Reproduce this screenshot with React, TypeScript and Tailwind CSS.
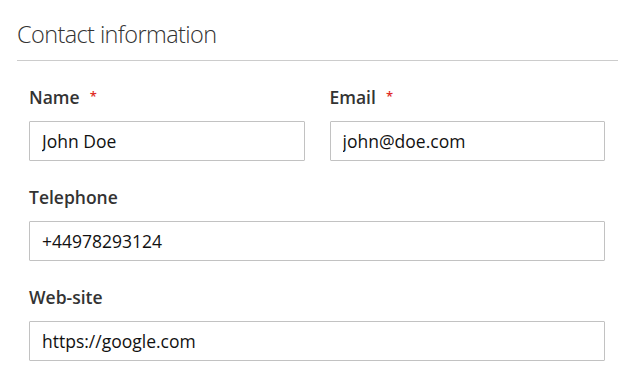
import React from "react";

function Field({ label, value, required }: { label: string; value: string; required?: boolean }) {
  return (
    <div className="flex flex-col">
      <label className="block h-[22px] text-[17.5px] leading-[22px] font-semibold text-[#333333] mb-[13px] whitespace-nowrap">
        {label}
        {required && <span className="text-[#e02b27] text-[13px] font-semibold ml-[10px] relative top-[-3px]">*</span>}
      </label>
      <input
        readOnly
        value={value}
        className="h-[40px] w-full border border-[#c2c2c2] rounded-[1px] bg-white px-[12px] text-[17.5px] text-[#111] outline-none"
        style={{ fontFamily: '"Open Sans", sans-serif' }}
      />
    </div>
  );
}

export default function App() {
  return (
    <div className="w-[641px] h-[386px] bg-white" style={{ fontFamily: '"Open Sans", sans-serif' }}>
      <div className="ml-[17px] w-[601px] pt-[18px]">
        <div className="text-[23.5px] leading-[32px] font-light tracking-[-0.6px] text-[#333333] pb-[10px] border-b border-[#cccccc]">
          Contact information
        </div>
        <div className="pl-[12px] pr-[13px] pt-[25px] flex flex-col gap-[25px]">
          <div className="grid grid-cols-2 gap-[25px]">
            <Field label="Name" value="John Doe" required />
            <Field label="Email" value="john@doe.com" required />
          </div>
          <Field label="Telephone" value="+44978293124" />
          <Field label="Web-site" value="https://google.com" />
        </div>
      </div>
    </div>
  );
}
